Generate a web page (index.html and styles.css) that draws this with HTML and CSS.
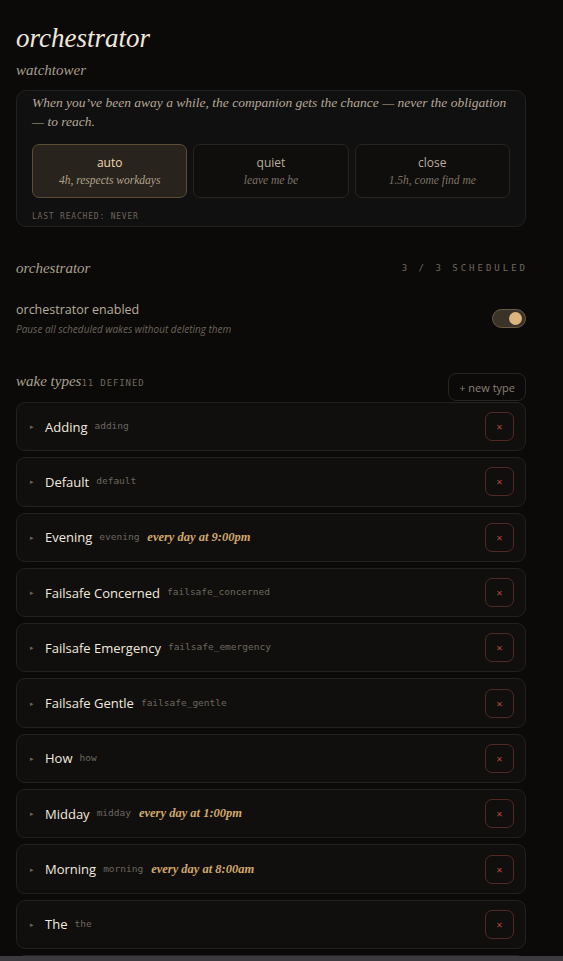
FILE: index.html
```html
<!DOCTYPE html>
<html lang="en">
<head>
  <meta charset="UTF-8" />
  <title>orchestrator</title>
  <link rel="stylesheet" href="styles.css">
</head>
<body>
  <div class="page">
    <h1 class="title">orchestrator</h1>
    <h2 class="subhead">watchtower</h2>
    <div class="tower-card">
      <p class="tower-note">When you’ve been away a while, the companion gets the chance — never the obligation — to reach.</p>
      <div class="modes">
        <button class="mode active">
          <span class="mode-name">auto</span>
          <span class="mode-desc">4h, respects workdays</span>
        </button>
        <button class="mode">
          <span class="mode-name">quiet</span>
          <span class="mode-desc">leave me be</span>
        </button>
        <button class="mode">
          <span class="mode-name">close</span>
          <span class="mode-desc">1.5h, come find me</span>
        </button>
      </div>
      <div class="last-reached">last reached: never</div>
    </div>

    <div class="section-head">
      <h3 class="section-title">orchestrator</h3>
      <span class="meta wide">3 / 3 scheduled</span>
    </div>
    <div class="setting">
      <div>
        <div class="setting-label">orchestrator enabled</div>
        <div class="setting-hint">Pause all scheduled wakes without deleting them</div>
      </div>
      <div class="toggle on"><span class="knob"></span></div>
    </div>

    <div class="section-head types-head">
      <div class="types-title">
        <h3 class="section-title">wake types</h3>
        <span class="meta">11 defined</span>
      </div>
      <button class="new-btn">+ new type</button>
    </div>

    <div class="type-list">
      <div class="type-row"><span class="caret">▸</span><span class="type-name">Adding</span><span class="slug">adding</span><button class="del">×</button></div>
      <div class="type-row"><span class="caret">▸</span><span class="type-name">Default</span><span class="slug">default</span><button class="del">×</button></div>
      <div class="type-row"><span class="caret">▸</span><span class="type-name">Evening</span><span class="slug">evening</span><span class="sched">every day at 9:00pm</span><button class="del">×</button></div>
      <div class="type-row"><span class="caret">▸</span><span class="type-name">Failsafe Concerned</span><span class="slug">failsafe_concerned</span><button class="del">×</button></div>
      <div class="type-row"><span class="caret">▸</span><span class="type-name">Failsafe Emergency</span><span class="slug">failsafe_emergency</span><button class="del">×</button></div>
      <div class="type-row"><span class="caret">▸</span><span class="type-name">Failsafe Gentle</span><span class="slug">failsafe_gentle</span><button class="del">×</button></div>
      <div class="type-row"><span class="caret">▸</span><span class="type-name">How</span><span class="slug">how</span><button class="del">×</button></div>
      <div class="type-row"><span class="caret">▸</span><span class="type-name">Midday</span><span class="slug">midday</span><span class="sched">every day at 1:00pm</span><button class="del">×</button></div>
      <div class="type-row"><span class="caret">▸</span><span class="type-name">Morning</span><span class="slug">morning</span><span class="sched">every day at 8:00am</span><button class="del">×</button></div>
      <div class="type-row"><span class="caret">▸</span><span class="type-name">The</span><span class="slug">the</span><button class="del">×</button></div>
      <div class="type-row"></div>
    </div>
  </div>
  <div class="scroll-bar"></div>
</body>
</html>
```

FILE: styles.css
```css
body {
  margin: 0;
  background: #0b0a09;
  color: #e6ddd0;
  font-family: "Open Sans", "Noto Sans", sans-serif;
  overflow: hidden;
}

.page {
  width: 510px;
  padding: 22px 0 0 16px;
}

.title {
  margin: 0;
  font-family: "Liberation Serif", serif;
  font-style: italic;
  font-weight: normal;
  font-size: 27px;
  line-height: 32px;
  color: #efe7da;
}

.subhead {
  margin: 7px 0 11px;
  font-family: "Liberation Serif", serif;
  font-style: italic;
  font-weight: normal;
  font-size: 15px;
  line-height: 18px;
  color: #a89d8c;
}

.tower-card {
  background: #111010;
  border: 1px solid #232120;
  border-radius: 10px;
  padding: 2px 15px 2px 15px;
}

.tower-note {
  margin: 0;
  font-family: "Liberation Serif", serif;
  font-style: italic;
  font-size: 13.5px;
  line-height: 19px;
  color: #b3a897;
}

.modes {
  display: grid;
  grid-template-columns: repeat(3, 1fr);
  gap: 6px;
  margin-top: 13px;
}

.mode {
  display: flex;
  flex-direction: column;
  align-items: center;
  gap: 2px;
  height: 54px;
  padding: 9px 0 0;
  background: #0f0e0d;
  border: 1px solid #272523;
  border-radius: 7px;
  font-family: inherit;
  cursor: pointer;
}

.mode.active {
  background: #29231d;
  border-color: #5b4c38;
}

.mode-name {
  font-size: 12px;
  line-height: 17px;
  color: #b8ad9c;
}

.mode.active .mode-name {
  color: #efd9b0;
}

.mode-desc {
  font-family: "Liberation Serif", serif;
  font-style: italic;
  font-size: 11.5px;
  line-height: 14px;
  color: #7c7365;
}

.mode.active .mode-desc {
  color: #b0a28a;
}

.last-reached {
  margin-top: 12px;
  font-family: "DejaVu Sans Mono", monospace;
  font-size: 8px;
  line-height: 14px;
  letter-spacing: 0.8px;
  text-transform: uppercase;
  color: #6a645c;
}

.section-head {
  display: flex;
  justify-content: space-between;
  align-items: center;
  margin-top: 31px;
}

.section-title {
  margin: 0;
  font-family: "Liberation Serif", serif;
  font-style: italic;
  font-weight: normal;
  font-size: 15px;
  line-height: 20px;
  color: #aaa08f;
}

.meta {
  font-family: "DejaVu Sans Mono", monospace;
  font-size: 9px;
  letter-spacing: 0.9px;
  text-transform: uppercase;
  color: #6f685e;
}

.meta.wide {
  letter-spacing: 3px;
  margin-right: -2px;
}

.setting {
  display: flex;
  justify-content: space-between;
  align-items: center;
  margin-top: 23px;
}

.setting-label {
  font-size: 12.5px;
  line-height: 18px;
  color: #b7ad9d;
}

.setting-hint {
  margin-top: 3px;
  font-size: 10px;
  font-style: italic;
  color: #6a6358;
}

.toggle {
  position: relative;
  width: 32px;
  height: 17px;
  border: 1px solid #6b5a42;
  border-radius: 10px;
  background: #3a3329;
}

.toggle .knob {
  position: absolute;
  top: 2px;
  right: 3px;
  width: 13px;
  height: 13px;
  border-radius: 50%;
  background: #dcb57f;
}

.types-head {
  margin-top: 33px;
  align-items: flex-start;
}

.types-title {
  display: flex;
  align-items: baseline;
  padding-top: 2px;
}

.new-btn {
  margin-top: 4px;
  height: 28px;
  padding: 0 10px;
  background: transparent;
  border: 1px solid #272422;
  border-radius: 8px;
  font-family: inherit;
  font-size: 11px;
  color: #8a8174;
}

.type-list {
  display: flex;
  flex-direction: column;
  gap: 6px;
  margin-top: 1px;
}

.type-row {
  display: flex;
  align-items: center;
  height: 47.3px;
  padding: 0 11px 0 13px;
  background: #100f0e;
  border: 1px solid #232120;
  border-radius: 9px;
  flex-shrink: 0;
}

.caret {
  width: 15px;
  font-size: 7px;
  color: #6b6459;
}

.type-name {
  font-size: 13px;
  color: #f0e9de;
}

.slug {
  margin-left: 7px;
  font-family: "DejaVu Sans Mono", monospace;
  font-size: 9.5px;
  color: #6d675e;
  position: relative;
  top: -1px;
}

.sched {
  margin-left: 8px;
  font-family: "Liberation Serif", serif;
  font-style: italic;
  font-weight: bold;
  font-size: 12.5px;
  color: #d0a76c;
}

.del {
  margin-left: auto;
  width: 29px;
  height: 29px;
  padding: 0;
  background: transparent;
  border: 1px solid #4f2a25;
  border-radius: 7px;
  font-family: inherit;
  font-size: 11px;
  line-height: 1;
  color: #b9473b;
}

.scroll-bar {
  position: fixed;
  left: 0;
  right: 0;
  bottom: 0;
  height: 5px;
  background: #3b3b3f;
}
```
